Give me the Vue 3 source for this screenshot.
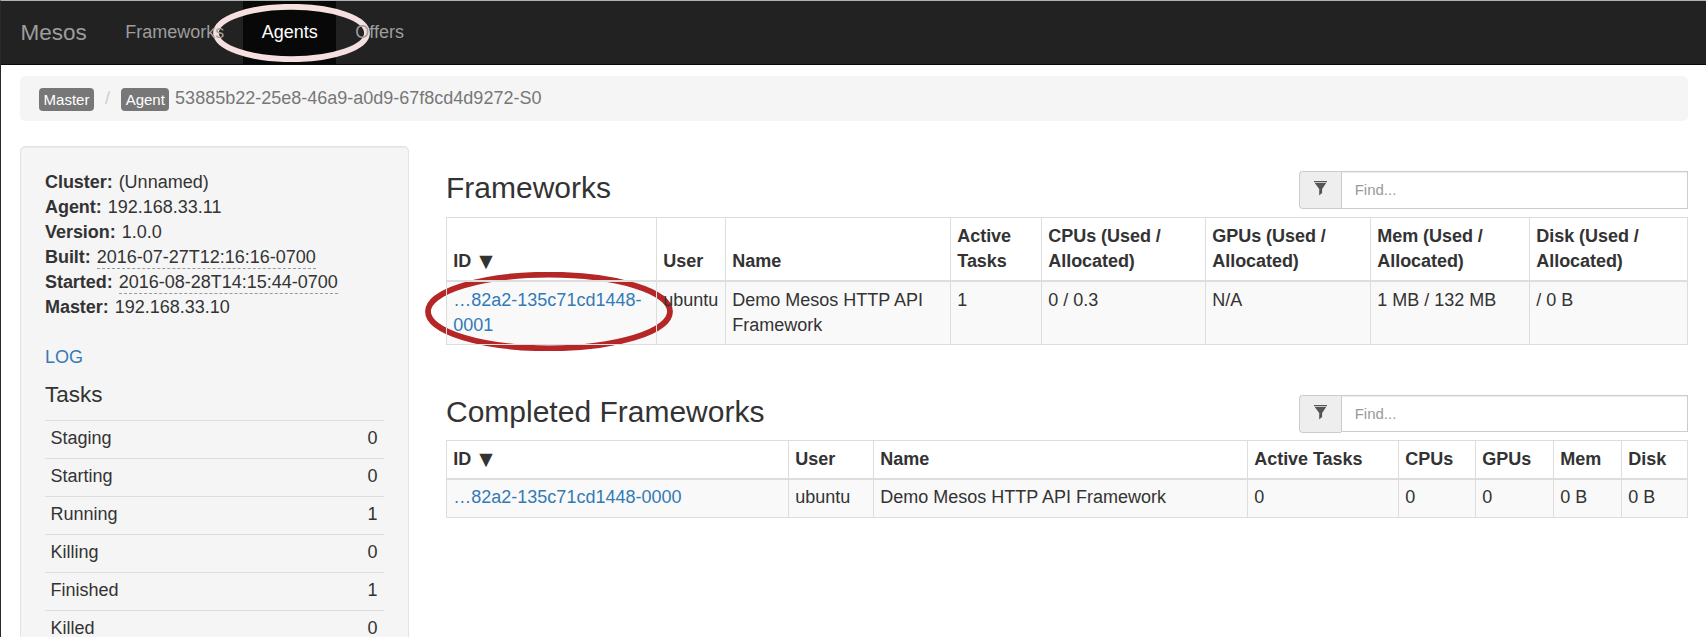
<script setup>
const details = [
  { label: 'Cluster', value: '(Unnamed)' },
  { label: 'Agent', value: '192.168.33.11' },
  { label: 'Version', value: '1.0.0' },
  { label: 'Built', value: '2016-07-27T12:16:16-0700', time: true },
  { label: 'Started', value: '2016-08-28T14:15:44-0700', time: true },
  { label: 'Master', value: '192.168.33.10' },
]
const tasks = [
  ['Staging', 0],
  ['Starting', 0],
  ['Running', 1],
  ['Killing', 0],
  ['Finished', 1],
  ['Killed', 0],
]
const sections = [
  {
    title: 'Frameworks',
    kind: 'active',
    marked: true,
    widths: [210, 69, 225, 91, 164, 165, 159, 158],
    heads: ['ID', 'User', 'Name', 'Active Tasks', 'CPUs (Used / Allocated)', 'GPUs (Used / Allocated)', 'Mem (Used / Allocated)', 'Disk (Used / Allocated)'],
    row: ['…82a2-135c71cd1448-0001', 'ubuntu', 'Demo Mesos HTTP API Framework', '1', '0 / 0.3', 'N/A', '1 MB / 132 MB', '/ 0 B'],
  },
  {
    title: 'Completed Frameworks',
    kind: 'completed',
    marked: false,
    widths: [342, 85, 374, 151, 77, 78, 68, 66],
    heads: ['ID', 'User', 'Name', 'Active Tasks', 'CPUs', 'GPUs', 'Mem', 'Disk'],
    row: ['…82a2-135c71cd1448-0000', 'ubuntu', 'Demo Mesos HTTP API Framework', '0', '0', '0', '0 B', '0 B'],
  },
]
</script>

<template>
  <div class="page">
    <nav class="navbar">
      <a class="brand"><span>Mesos</span></a>
      <a class="nav-link"><span>Frameworks</span></a>
      <a class="nav-link active"><span>Agents</span></a>
      <a class="nav-link"><span>Offers</span></a>
      <svg class="nav-ring" width="157" height="58" viewBox="0 0 157 58">
        <ellipse cx="78.5" cy="29" rx="75.5" ry="26.2" />
      </svg>
    </nav>

    <div class="content">
      <div class="breadcrumb">
        <span class="badge">Master</span>
        <span class="slash">/</span>
        <span class="badge">Agent</span>
        <span class="agent-id">53885b22-25e8-46a9-a0d9-67f8cd4d9272-S0</span>
      </div>

      <div class="columns">
        <aside class="well">
          <div v-for="d in details" :key="d.label" class="detail">
            <b>{{ d.label }}:</b>
            <span :class="{ time: d.time }">{{ d.value }}</span>
          </div>
          <a class="log">LOG</a>
          <h4>Tasks</h4>
          <div v-for="[name, count] in tasks" :key="name" class="task">
            <span>{{ name }}</span>
            <span>{{ count }}</span>
          </div>
        </aside>

        <main>
          <section v-for="s in sections" :key="s.title" :class="s.kind">
            <header>
              <h2>{{ s.title }}</h2>
              <div class="filter">
                <span class="addon">
                  <svg width="13" height="15" viewBox="0 0 13 15">
                    <path d="M0 0h13v1.3H0z M0.8 1.9h11.4L8.1 8v4L5.2 14.6V8z" />
                  </svg>
                </span>
                <input type="text" placeholder="Find..." />
              </div>
            </header>
            <div class="table-box">
              <svg v-if="s.marked" class="id-ring" width="248" height="79" viewBox="0 0 248 79">
                <ellipse cx="124" cy="39.5" rx="121" ry="36.8" />
              </svg>
              <table>
                <colgroup>
                  <col v-for="(w, i) in s.widths" :key="i" :style="{ width: w + 'px' }" />
                </colgroup>
                <thead>
                  <tr>
                    <th v-for="(h, i) in s.heads" :key="h">
                      {{ h }} <span v-if="i === 0" class="sort">▼</span>
                    </th>
                  </tr>
                </thead>
                <tbody>
                  <tr>
                    <td v-for="(c, i) in s.row" :key="i">
                      <a v-if="i === 0">{{ c }}</a>
                      <template v-else>{{ c }}</template>
                    </td>
                  </tr>
                </tbody>
              </table>
            </div>
          </section>
        </main>
      </div>
    </div>
  </div>
</template>

<style>
body {
  margin: 0;
  background: #fff;
}
</style>

<style scoped>
* {
  box-sizing: border-box;
}
.page {
  height: 637px;
  overflow: hidden;
  border-left: 1px solid #2a2a2a;
  border-top: 1px solid #b0b4b0;
  font: 18px/25px "Liberation Sans", Arial, sans-serif;
  color: #333;
}
a {
  color: #337ab7;
}
b,
th {
  letter-spacing: -0.05px;
}
.navbar {
  position: relative;
  display: flex;
  height: 64px;
  padding-left: 0.7px;
  background: #222;
  border-bottom: 1px solid #080808;
}
.navbar a {
  padding: 18.5px 18.75px 0;
  color: #9d9d9d;
}
.navbar span {
  position: relative;
  z-index: 2;
}
.navbar .brand {
  padding-top: 19px;
  padding-right: 19.7px;
  font-size: 22.5px;
}
.navbar .active {
  background: #080808;
  color: #fff;
}
.nav-ring {
  position: absolute;
  z-index: 1;
  left: 212px;
  top: 3px;
}
.nav-ring ellipse {
  fill: none;
  stroke: #f5dfdf;
  stroke-width: 5.8;
}
.content {
  padding: 11px 18px 0 19px;
}
.breadcrumb {
  display: flex;
  height: 45px;
  padding: 9.5px 19px;
  border-radius: 5px;
  background: #f5f5f5;
  color: #777;
}
.badge {
  height: 23px;
  margin-top: 2.5px;
  padding: 0 4.6px;
  border-radius: 4px;
  background: #777;
  color: #fff;
  font-size: 15px;
  line-height: 24px;
}
.slash {
  width: 27px;
  padding-left: 11px;
  color: #ccc;
}
.agent-id {
  margin-left: 5.7px;
}
.columns {
  display: flex;
  gap: 37px;
  margin-top: 25px;
}
.well {
  width: 389px;
  height: 560px;
  flex: none;
  padding: 23.4px 24px;
  border: 1px solid #e3e3e3;
  border-radius: 5px;
  background: #f5f5f5;
  box-shadow: inset 0 1px 1px rgba(0, 0, 0, 0.05);
}
.detail {
  display: flex;
  gap: 6px;
  height: 25px;
}
.time {
  height: 24px;
  border-bottom: 1px dashed #999;
}
.log {
  display: block;
  margin-top: 25px;
}
h2,
h4 {
  margin: 0;
  font-weight: 400;
}
h4 {
  margin: 11.6px 0 13px;
  font-size: 22.5px;
}
.task {
  display: flex;
  justify-content: space-between;
  height: 38px;
  padding: 5.4px 6.4px 0 5.4px;
  border-top: 1px solid #ddd;
}
main {
  flex: 1;
  padding-top: 25px;
}
header {
  display: flex;
  justify-content: space-between;
  height: 38px;
}
h2 {
  font-size: 30px;
  line-height: 33px;
}
.filter {
  display: flex;
  width: 389px;
}
.addon {
  display: flex;
  justify-content: center;
  width: 42px;
  padding-top: 9px;
  border: 1px solid #ccc;
  border-right: 0;
  border-radius: 4px 0 0 4px;
  background: #eee;
}
.addon path {
  fill: #555;
}
input {
  flex: 1;
  min-width: 0;
  height: 38px;
  padding: 0 12.7px 2px;
  border: 1px solid #ccc;
  background: #fff;
  box-shadow: inset 0 1px 1px rgba(0, 0, 0, 0.075);
  font: 15px "Liberation Sans", Arial, sans-serif;
}
input::placeholder {
  color: #999;
}
.completed input {
  height: 37px;
  padding-bottom: 1px;
}
.active header {
  margin-bottom: 8px;
}
.completed {
  margin-top: 50px;
}
.completed header {
  margin-bottom: 7px;
}
/* The striped row colour sits here so the ring can pass between it and the grid lines. */
.table-box {
  position: relative;
  isolation: isolate;
  background: linear-gradient(#f9f9f9, #f9f9f9) bottom / 100% 63px no-repeat;
}
.completed .table-box {
  background-size: 100% 38px;
}
.id-ring {
  position: absolute;
  z-index: -1;
  left: -21px;
  top: 55px;
}
.id-ring ellipse {
  fill: none;
  stroke: #b52626;
  stroke-width: 5.8;
}
table {
  width: 1242px;
  table-layout: fixed;
  border-collapse: collapse;
}
th,
td {
  height: 63px;
  padding: 6px 5px 5px 6.3px;
  border: 1px solid #ddd;
  text-align: left;
  vertical-align: top;
}
th {
  padding: 5px 5px 6px 6.3px;
  border-bottom-width: 2px;
  vertical-align: bottom;
}
td {
  height: 64px;
}
.sort {
  margin-left: 3px;
  font-family: "DejaVu Sans", sans-serif;
  font-size: 17.5px;
  font-weight: 400;
  line-height: 1;
}
.completed th {
  height: 38px;
}
.completed td {
  height: 39px;
  padding-top: 5.4px;
}
</style>
